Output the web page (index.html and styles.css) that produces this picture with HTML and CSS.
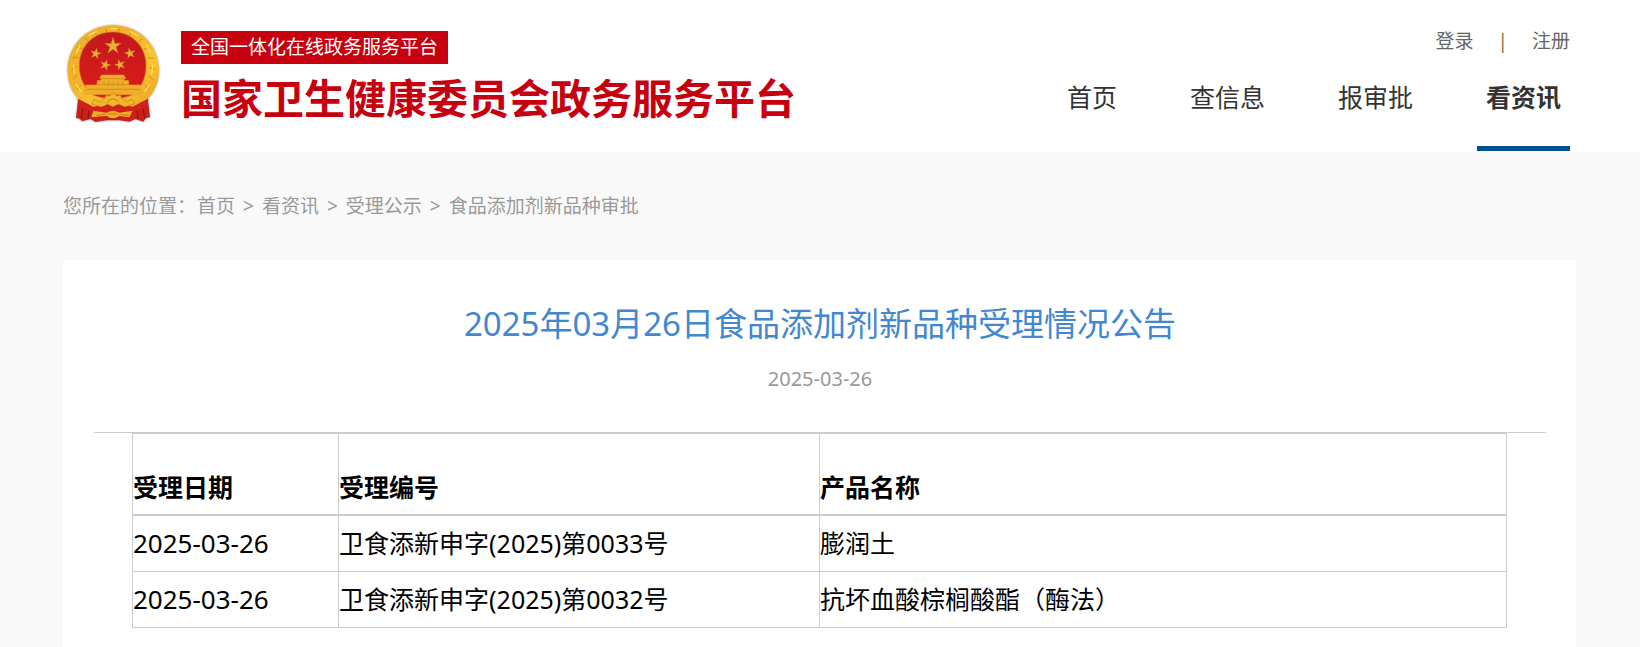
FILE: index.html
```html
<!DOCTYPE html>
<html lang="zh-CN">
<head>
<meta charset="utf-8">
<meta name="viewport" content="width=device-width, initial-scale=1">
<title>国家卫生健康委员会政务服务平台</title>
<link rel="stylesheet" href="styles.css">
</head>
<body>
<header class="site-header">
  <div class="wrap header-row">
    <div class="brand">
      <svg class="emblem" viewBox="15 21 288 306" aria-hidden="true">
        <defs>
          <linearGradient id="gold" x1="0" y1="0" x2="1" y2="1">
            <stop offset="0" stop-color="#eeb02a"/>
            <stop offset=".35" stop-color="#f2b22a"/>
            <stop offset=".7" stop-color="#fac533"/>
            <stop offset="1" stop-color="#e89a1c"/>
          </linearGradient>
          <linearGradient id="field" x1="0" y1="0" x2="0" y2="1">
            <stop offset="0" stop-color="#c3181c"/>
            <stop offset="1" stop-color="#dd1c19"/>
          </linearGradient>
          <path id="star" d="M0-26 5.6-7.6 25-8 9.1 3 15.4 21 0 9.6-15.4 21-9.1 3-25-8-5.6-7.6Z"/>
        </defs>
        <path fill="#c9201b" d="M56 236 48 306Q60 306 66 316L92 309 106 318 140 313 178 313 208 317 226 309 250 317 258 306 270 304 262 236Z"/>
        <path fill="none" stroke="#931512" stroke-width="4" d="M70 262 64 310M88 272 84 308M230 272 234 308M247 262 254 308"/>
        <path fill="url(#gold)" d="M160 28C236 28 297 86 297 163 297 200 281 231 262 249L218 272 160 262 100 272 55 249C36 229 23 200 23 163 23 86 84 28 160 28Z"/>
        <path fill="none" stroke="#d98c16" stroke-width="3" d="M38 190 52 176M34 160 50 152M38 126 56 124M52 94 68 98M74 66 86 76M104 46 110 60M138 38 140 50M178 38 176 50M214 46 208 60M246 68 234 78M268 94 252 100M282 126 264 126M286 160 268 154M282 192 266 180M268 222 254 206M50 222 64 206"/>
        <path fill="none" stroke="#ffdc62" stroke-width="4" d="M44 172 40 146M48 112 60 88M86 58 110 46M150 38 170 38M210 46 234 60M260 88 272 112M279 146 275 174M270 204 254 228M48 204 64 228"/>
        <path fill="url(#field)" stroke="#c47813" stroke-width="2" d="M158 48C216 48 258 91 258 149 258 188 242 219 214 238Q188 248 158 248T102 238C74 219 58 188 58 149 58 91 100 48 158 48Z"/>
        <g fill="#eaad38" stroke="#c4811f" stroke-width="1">
          <use href="#star" transform="translate(159 90)"/>
          <use href="#star" transform="translate(107 113) rotate(12) scale(.66)"/>
          <use href="#star" transform="translate(210 112) rotate(-12) scale(.66)"/>
          <use href="#star" transform="translate(136 147) rotate(18) scale(.66)"/>
          <use href="#star" transform="translate(180 146) rotate(-18) scale(.66)"/>
        </g>
        <path fill="#efae2a" d="M124 176H192L198 188H193V193H206L207 206H242V222H248V236H70V222H76V206H110L112 193H123V188H118Z"/>
        <path fill="none" stroke="#c77b17" stroke-width="2" d="M122 188H194M112 206H207M76 220H242M132 196V204M146 196V204M160 196V204M174 196V204M188 196V204"/>
        <path fill="#f4b52e" stroke="#c77b17" stroke-width="2" d="M103 250 120 258 134 247 139 237 149 240 155 232 165 232 170 240 181 237 185 247 200 257 216 250 224 263 194 273 176 264 158 272 142 264 126 274 94 263Z"/>
        <path fill="none" stroke="#c77b17" stroke-width="3" d="M140 261Q159 236 178 261"/>
        <path fill="#d4201a" d="M53 248Q91 284 132 271L158 277 184 271Q226 284 265 248L262 270Q224 296 180 285L158 292 134 285Q88 294 56 269Z"/>
        <path fill="#efaa28" d="M100 284 140 290Q158 278 178 290L218 284 208 304 178 300Q158 314 140 300L94 304Z"/>
        <path fill="none" stroke="#b56a13" stroke-width="2" d="M144 294H174M109 298 136 295M181 295 207 298"/>
      </svg>
      <div class="brand-text">
        <span class="brand-tag">全国一体化在线政务服务平台</span>
        <span class="brand-name">国家卫生健康委员会政务服务平台</span>
      </div>
    </div>
    <div class="header-side">
      <div class="account">
        <a href="#login">登录</a>
        <span class="account-sep">|</span>
        <a href="#register">注册</a>
      </div>
      <nav class="main-nav">
        <a href="#home">首页</a>
        <a href="#query">查信息</a>
        <a href="#apply">报审批</a>
        <a class="active" href="#news" aria-current="page">看资讯</a>
      </nav>
    </div>
  </div>
</header>
<main class="wrap">
  <nav class="crumbs">
    <span>您所在的位置：</span>
    <a href="#home">首页</a>
    <span class="crumb-sep">&gt;</span>
    <a href="#news">看资讯</a>
    <span class="crumb-sep">&gt;</span>
    <a href="#notice">受理公示</a>
    <span class="crumb-sep">&gt;</span>
    <a href="#additive">食品添加剂新品种审批</a>
  </nav>
  <article class="card">
    <h1 class="title">2025年03月26日食品添加剂新品种受理情况公告</h1>
    <p class="date">2025-03-26</p>
    <div class="content">
      <table class="records">
        <thead>
          <tr><th class="col-date" scope="col">受理日期</th><th class="col-number" scope="col">受理编号</th><th scope="col">产品名称</th></tr>
        </thead>
        <tbody>
          <tr><td class="day">2025-03-26</td><td>卫食添新申字(2025)第0033号</td><td>膨润土</td></tr>
          <tr><td class="day">2025-03-26</td><td>卫食添新申字(2025)第0032号</td><td>抗坏血酸棕榈酸酯（酶法）</td></tr>
        </tbody>
      </table>
    </div>
  </article>
</main>
</body>
</html>
```
FILE: styles.css
```css
* {
  box-sizing: border-box;
}

body {
  margin: 0;
  background: #f9f9f9;
  color: #000;
  font-family: "Noto Sans", "Noto Sans CJK SC", sans-serif;
}

a {
  color: inherit;
  text-decoration: none;
}

.wrap {
  margin: 0 64px 0 63px;
}

.site-header {
  background: #fff;
}

.header-row {
  display: flex;
  justify-content: space-between;
  padding: 23px 6px 1px 2px;
}

.brand {
  display: flex;
  gap: 20px;
}

.emblem {
  width: 96px;
  height: 102px;
  filter: drop-shadow(0 0 1px #999);
}

.brand-text {
  display: flex;
  flex-direction: column;
  align-items: flex-start;
  padding-top: 8px;
  white-space: nowrap;
}

.brand-tag {
  padding: 0 10px;
  background: #c7000f;
  color: #fff;
  font-size: 19px;
  line-height: 33px;
}

.brand-name {
  margin-top: 6px;
  color: #c7000f;
  font-size: 41px;
  font-weight: 700;
  line-height: 56px;
}

.header-side {
  display: flex;
  flex-direction: column;
  align-items: flex-end;
  padding-top: 6px;
  white-space: nowrap;
}

.account {
  display: flex;
  gap: 24px;
  color: #666;
  font-size: 19px;
  line-height: 24px;
}

.account-sep {
  color: #a0653c;
}

.main-nav {
  display: flex;
  gap: 55px;
  margin-top: 26px;
  color: #333;
  font-size: 25px;
  line-height: 36px;
}

.main-nav a {
  padding: 0 9px 31px;
  border-bottom: 5px solid transparent;
}

.main-nav .active {
  border-color: #00508e;
  font-weight: 700;
}

.crumbs {
  display: flex;
  gap: 8px;
  padding: 40px 0;
  color: #999;
  font-size: 19px;
  line-height: 28px;
}

.crumbs span:first-child {
  margin-right: -7px;
}

.card {
  min-height: calc(100vh - 260px);
  padding: 40px 30px 20px 31px;
  background: #fff;
  text-align: center;
}

.title {
  margin: 0;
  color: #4287d0;
  font-size: 33px;
  font-weight: 400;
  line-height: 48px;
}

.date {
  margin: 17px 0 0;
  color: #999;
  font-size: 20px;
  line-height: 28px;
}

.content {
  margin-top: 39px;
  padding: 0 39px 0 38px;
  border-top: 1px solid #ccc;
}

.records {
  width: 100%;
  border-collapse: collapse;
  table-layout: fixed;
  font-size: 25px;
  line-height: 36px;
  text-align: left;
}

.records th,
.records td {
  padding: 9px 0 10px;
  border: 1px solid #ccc;
}

.records th {
  padding: 35px 0 9px;
  border-bottom-width: 2px;
}

.records .day {
  font-size: 26px;
}

.col-date {
  width: 15%;
}

.col-number {
  width: 35%;
}
```
